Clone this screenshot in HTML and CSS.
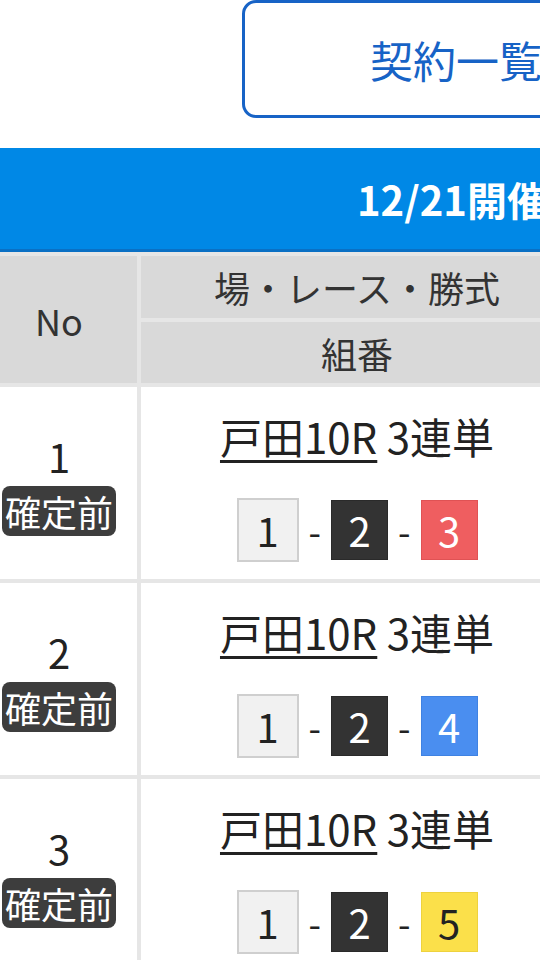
FILE: index.html
```html
<!DOCTYPE html>
<html lang="ja">
<head>
  <meta charset="UTF-8">
  <meta name="viewport" content="width=device-width, initial-scale=1.0">
  <title>契約一覧</title>
  <link rel="stylesheet" href="styles.css">
</head>
<body>
  <div class="page">
    <div class="top-bar">
      <a class="list-button" href="#">契約一覧へ</a>
    </div>
    <div class="title-bar">12/21開催分</div>
    <table class="bet-table">
      <thead>
        <tr>
          <th class="col-no" rowspan="2">No</th>
          <th class="col-race">場・レース・勝式</th>
        </tr>
        <tr>
          <th class="col-race sub">組番</th>
        </tr>
      </thead>
      <tbody>
        <tr>
          <td class="col-no">
            <div class="row-no">1</div>
            <span class="badge">確定前</span>
          </td>
          <td class="col-race">
            <div class="race"><span class="race-link">戸田10R</span> 3連単</div>
            <div class="combo">
              <span class="num num-1">1</span><span class="dash">-</span><span class="num num-2">2</span><span class="dash">-</span><span class="num num-3">3</span>
            </div>
          </td>
        </tr>
        <tr>
          <td class="col-no">
            <div class="row-no">2</div>
            <span class="badge">確定前</span>
          </td>
          <td class="col-race">
            <div class="race"><span class="race-link">戸田10R</span> 3連単</div>
            <div class="combo">
              <span class="num num-1">1</span><span class="dash">-</span><span class="num num-2">2</span><span class="dash">-</span><span class="num num-4">4</span>
            </div>
          </td>
        </tr>
        <tr>
          <td class="col-no">
            <div class="row-no">3</div>
            <span class="badge">確定前</span>
          </td>
          <td class="col-race">
            <div class="race"><span class="race-link">戸田10R</span> 3連単</div>
            <div class="combo">
              <span class="num num-1">1</span><span class="dash">-</span><span class="num num-2">2</span><span class="dash">-</span><span class="num num-5">5</span>
            </div>
          </td>
        </tr>
      </tbody>
    </table>
  </div>
</body>
</html>
```

FILE: styles.css
```css
body {
  margin: 0;
  padding: 0;
  overflow: hidden;
  background: #fff;
  font-family: "Noto Sans CJK JP", "Noto Sans", sans-serif;
  color: #222;
}
.page {
  width: 820px;
  margin-left: -19px;
}
.top-bar {
  height: 148px;
}
.list-button {
  display: flex;
  align-items: center;
  box-sizing: border-box;
  width: 420px;
  height: 118px;
  margin-left: 261px;
  padding-left: 125px;
  border: 3px solid #1763c6;
  border-radius: 14px;
  color: #1763c6;
  font-size: 43px;
  text-decoration: none;
  white-space: nowrap;
}
.title-bar {
  display: flex;
  align-items: center;
  height: 101px;
  padding-left: 376px;
  background: #0088e6;
  border-bottom: 3px solid #0a70c4;
  color: #fff;
  font-size: 40px;
  font-weight: bold;
  white-space: nowrap;
}
.bet-table {
  border-collapse: separate;
  border-spacing: 0;
  border-top: 4px solid #e6e6e6;
}
.bet-table th,
.bet-table td {
  padding: 0;
  text-align: center;
  vertical-align: middle;
  border-bottom: 4px solid #e6e6e6;
}
.bet-table th {
  background: #d9d9d9;
  color: #333;
  font-weight: normal;
  font-size: 36px;
  height: 62px;
}
.bet-table th.sub {
  height: 61px;
}
.col-no {
  width: 156px;
  border-right: 4px solid #e6e6e6;
}
.col-race {
  width: 432px;
}
.bet-table td {
  height: 192px;
}
.row-no {
  font-size: 40px;
  line-height: 52px;
}
.badge {
  display: inline-block;
  margin-top: 4px;
  padding: 0 3px;
  height: 50px;
  line-height: 50px;
  border-radius: 8px;
  background: #3d3d3d;
  color: #fff;
  font-size: 36px;
}
.race {
  font-size: 42px;
  line-height: 64px;
  color: #222;
}
.race-link {
  text-decoration: underline;
  text-decoration-thickness: 3px;
  text-underline-offset: 6px;
}
.combo {
  display: flex;
  justify-content: center;
  align-items: center;
  margin-top: 30px;
}
.num {
  display: flex;
  justify-content: center;
  align-items: center;
  width: 55px;
  height: 58px;
  font-size: 40px;
  border: 1px solid transparent;
}
.num-1 {
  width: 58px;
  height: 60px;
  background: #f1f1f1;
  border: 2px solid #cfcfcf;
  color: #222;
}
.num-2 {
  background: #333;
  border-color: #2a2a2a;
  color: #fff;
}
.num-3 {
  background: #ef5e60;
  border-color: #e05254;
  color: #fff;
}
.num-4 {
  background: #4a8ef0;
  border-color: #3f82e2;
  color: #fff;
}
.num-5 {
  background: #fbe04a;
  border-color: #eed23e;
  color: #222;
}
.dash {
  margin: 0 10px;
  font-size: 36px;
  color: #222;
}
```
